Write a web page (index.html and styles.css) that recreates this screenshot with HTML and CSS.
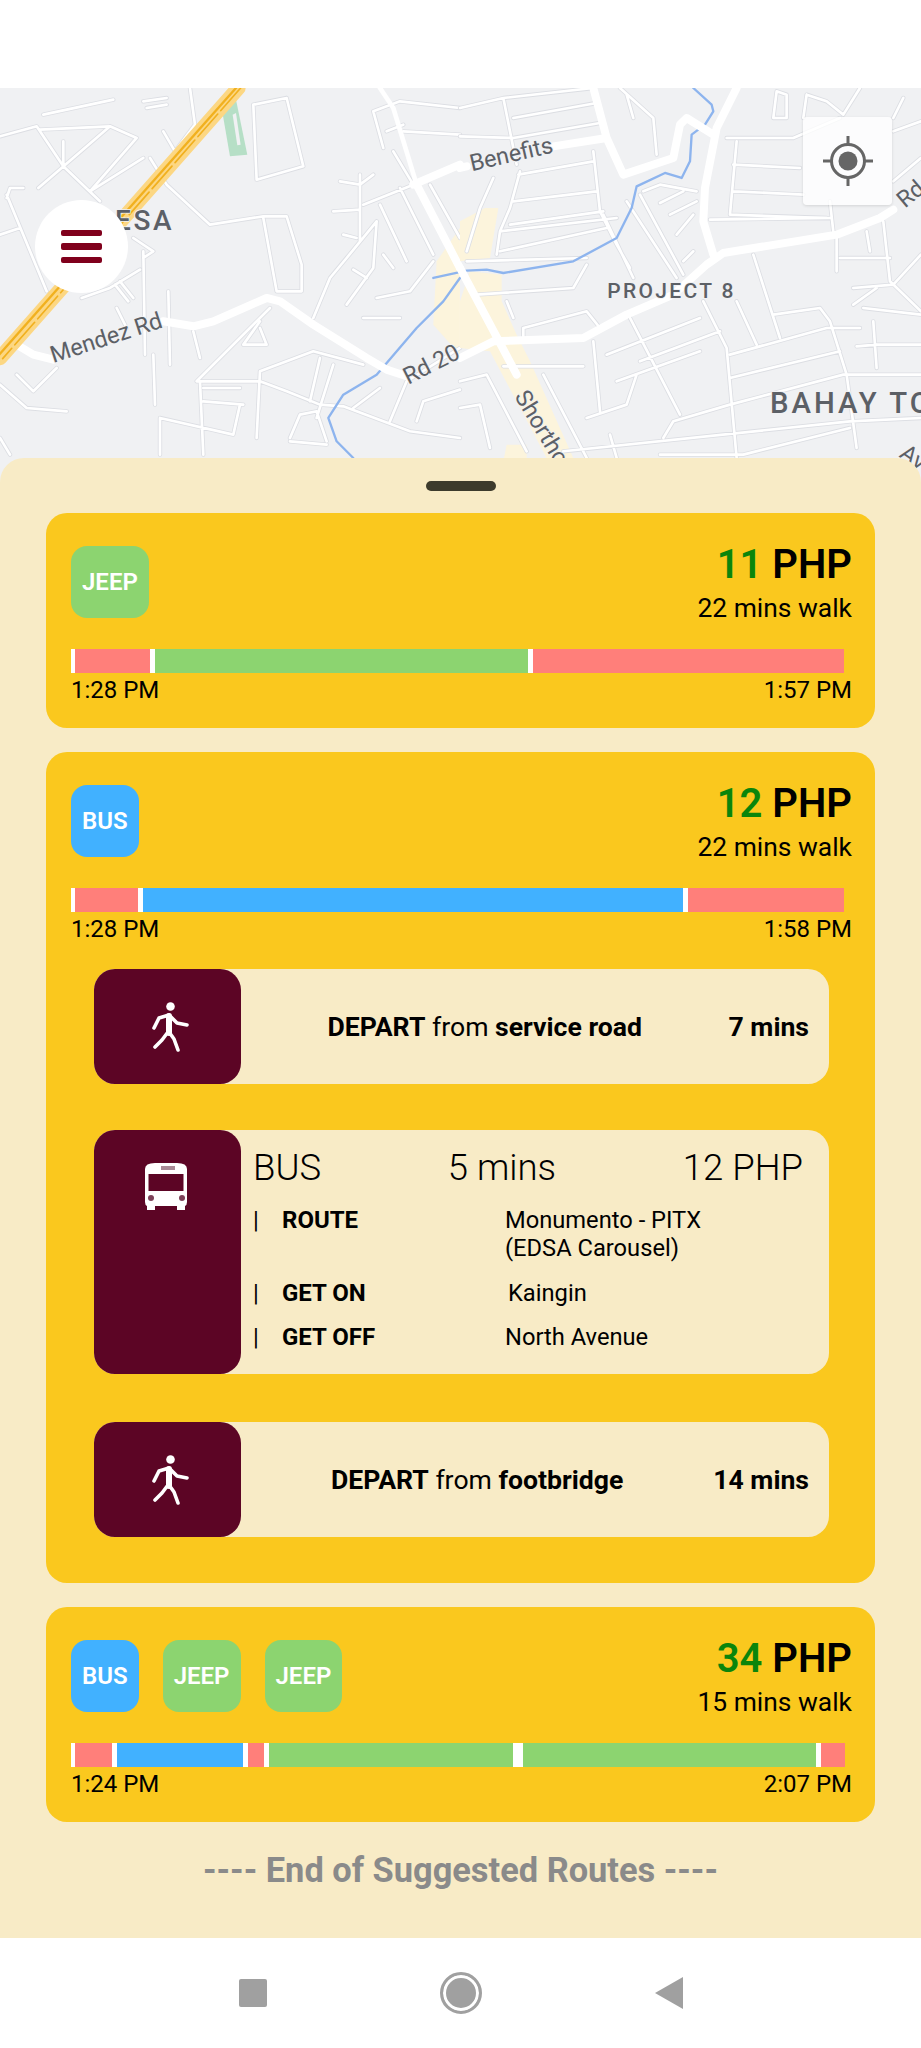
FILE: index.html
```html
<!DOCTYPE html>
<html lang="en">

<head>
    <meta charset="UTF-8">
    <meta name="viewport" content="width=device-width, initial-scale=1.0">
    <title>Suggested Routes</title>
    <link rel="stylesheet" href="styles.css">
</head>

<body>
    <div class="status"></div>

    <div class="map">
        <svg class="map-art" viewBox="0 0 921 400" width="921" height="400">
            <defs>
                <path id="minorLeft" d="M0 145L110 115L190 235L300 340M130 80L340 35M120 125L330 115L410 150L270 310M190 160V235M115 300L330 115M270 310L430 210M20 330L30 300H70M20 320L140 610M0 440L60 420M440 60L500 50M430 40L500 30M570 0L585 110L525 190M490 130L525 190M450 210L500 290L630 410L790 385H860L905 530V610H830L790 390M760 50L860 30M760 50L770 275L910 235L860 30M430 490L435 800M345 590L385 640M360 580L400 630M245 630L330 600L420 545M400 450L460 490L430 510M505 610L510 830M580 730L600 810M350 660L380 720M460 800L465 950M50 860L100 910L170 840M0 890L80 960L200 970M810 660L590 880M780 700L730 770L800 770L780 720M600 880L610 1100M590 880H780L860 910L960 950L1030 955L1230 1030L1380 1050M780 850L940 790L1090 830M780 850L770 1050M610 900H720M610 940L730 950M480 990L700 1040L720 950M480 990V1100M960 810L930 940M1000 830L950 990M870 1050L900 980L950 970L980 1060M870 1060L980 1070M1130 400L1040 510L990 570L940 690M1000 370L1080 365M1020 280L1080 290L1120 260M1080 260V460M1030 440L1070 450M1090 350L1240 290M1120 70L1200 40L1380 60M1120 70L1150 180M1160 130L1210 110M1210 130L1380 140M1180 190L1240 290M1140 350L1220 520M1200 300L1300 500M1290 290L1380 450M1040 650L1120 540L1130 400M1060 545L1100 570M1150 500L1180 540M1130 630L1230 610L1300 520M1090 690H1200M1060 960L1140 900M1170 1000L1220 880L1380 780M1250 1000L1270 940L1380 905M0 1050L30 1100" />
                <path id="minorRight" d="M0 60L130 30L400 0M130 30L170 230M160 90L410 45M0 145L160 150L420 105M175 260L400 220M160 340L410 310M150 410L430 370M120 430L150 360L180 250M110 500L120 430L470 390M120 490L440 420M20 520L380 510M100 270L60 360L20 490M400 190L420 370L470 470L510 540M480 0L580 90L590 200M500 20L520 90M430 380L520 570M540 320L670 560M550 310L600 290L710 310M600 345L670 310M630 380L710 340M650 440L700 380M670 520L700 490M500 340L650 570M50 620L340 600L380 530M140 640L160 690M190 720L380 670L420 720M190 750V720M510 690L660 980M400 760L420 970M370 835H130M440 800L720 690M540 820L780 730M470 880L720 790M730 640L800 780L830 1110M830 640L890 770M880 500L960 750M810 800L1100 720H1200M810 870L1140 790M810 950L1150 860H1383M940 680L1080 660L1110 700L1160 860L1190 1080M610 1050L640 1000L810 950M380 990L500 950L530 860M310 1090L1170 1000L1383 990M450 1040L470 1110M600 1100H850L1170 1020M250 860L380 1110M0 880L80 860L200 1090M0 960L60 950L90 1080M1190 775L1250 770H1383M1240 700L1250 840M1130 440V550M1110 340L1120 430M1140 510H1290M1270 400L1290 580L1383 670M1180 600L1300 590M1180 650L1250 600M1210 660L1383 680M1220 430L1230 490M1300 590L1383 500M800 150H1000L1140 90M830 160L810 380L1100 390M820 230L1020 240M820 310L1030 320M750 395L1110 390M950 10L940 90H980V20L950 10M1040 20L1030 90M1040 20L1100 40L1150 80L1200 0M1300 130L1383 100M1330 30L1300 90M1300 280L1383 210" />
            </defs>

            <g class="scale-left">
                <polygon class="built" points="1310,520 1380,420 1380,800 1300,710" />
                <polygon class="park" points="665,60 705,20 742,200 690,205" />
                <polygon class="park-in" points="698,80 708,75 722,170 712,172" />
                <use class="casing" href="#minorLeft" />
                <use class="minor" href="#minorLeft" />
                <path class="water" d="M1380 570L1330 640L1250 720L1130 860L1030 920L985 990L1010 1060L1060 1110" />
                <path class="mid" d="M1140 0L1180 60L1250 290" />
                <path class="major" d="M50 770L100 800L160 815M490 700L580 715L640 700L800 630L840 640L940 710L1100 810L1160 845L1220 865M1240 290L1380 230M1250 290L1380 540" />
                <path class="edsa-base" d="M715 0L0 810" />
                <path class="edsa-line" d="M708 0L-8 806" />
                <path class="edsa-mid" d="M722 0L8 812" />
            </g>

            <g class="scale-right">
                <polygon class="built" points="75,360 115,360 90,510 0,520 0,400" />
                <polygon class="built" points="30,550 125,560 125,640 170,740 210,820 340,1110 260,1110 90,790 0,780 0,640" />
                <polygon class="built" points="140,1070 200,1070 200,1120 130,1120" />
                <use class="casing" href="#minorRight" />
                <use class="minor" href="#minorRight" />
                <path class="water" d="M700 0L755 50L760 70L735 110L695 140L690 220L665 270L615 255L530 295L515 360L470 450L340 520L130 555L80 545L20 548L-80 570" />
                <path class="major" d="M0 240L20 235M280 175L440 150L490 260L640 210L660 110L680 90L760 140M830 0L770 120L735 300L730 400L760 500M0 810L100 760L370 750L500 680L640 620L740 530L790 495L1130 440L1260 390L1300 365M0 540L170 860M400 0L440 150" />
            </g>

            <g class="map-text">
                <text class="scale-left label-area" x="345" y="425">ESA</text>
                <text class="label-road" transform="scale(.3333) rotate(-18 160 825)" x="160" y="825">Mendez Rd</text>
                <text class="label-road" transform="scale(.3333) rotate(-27 1225 890)" x="1225" y="890">Rd 20</text>
                <text class="label-road" transform="translate(460 0) scale(.3333) rotate(-13 35 250)" x="35" y="250">Benefits</text>
                <text class="label-road" transform="translate(460 0) scale(.3333) rotate(59 162 925)" x="162" y="925">Shorthorn</text>
                <text class="label-road" transform="translate(460 0) scale(.3333) rotate(-40 1335 362)" x="1335" y="362">Rd</text>
                <text class="label-road" transform="translate(460 0) scale(.3333) rotate(35 1315 1105)" x="1315" y="1105">Av</text>
                <text class="label-small" transform="translate(460 0) scale(.3333)" x="442" y="630">PROJECT 8</text>
                <text class="label-big" transform="translate(460 0) scale(.3333)" x="930" y="975">BAHAY TOLE</text>
            </g>
        </svg>

        <button class="menu-btn"><span></span><span></span><span></span></button>

        <button class="locate-btn">
            <svg viewBox="0 0 56 56" width="56" height="56">
                <circle cx="28" cy="28" r="9.5" fill="#666" />
                <circle cx="28" cy="28" r="16.5" fill="none" stroke="#666" stroke-width="3" />
                <path d="M28 3V12M28 44V53M3 28H12M44 28H53" stroke="#666" stroke-width="3" />
            </svg>
        </button>
    </div>

    <div class="sheet">
        <div class="handle"></div>

        <div class="card">
            <div class="card-head">
                <div class="chips">
                    <div class="chip jeep">JEEP</div>
                </div>
                <div class="fare">
                    <div class="price"><span class="amount">11</span> PHP</div>
                    <div class="walk">22 mins walk</div>
                </div>
            </div>
            <div class="bar">
                <i class="gap" style="width:4px"></i>
                <i class="red" style="width:75px"></i>
                <i class="gap" style="width:5px"></i>
                <i class="green" style="width:373px"></i>
                <i class="gap" style="width:5px"></i>
                <i class="red" style="width:311px"></i>
            </div>
            <div class="times"><span>1:28 PM</span><span>1:57 PM</span></div>
        </div>

        <div class="card">
            <div class="card-head">
                <div class="chips">
                    <div class="chip bus">BUS</div>
                </div>
                <div class="fare">
                    <div class="price"><span class="amount">12</span> PHP</div>
                    <div class="walk">22 mins walk</div>
                </div>
            </div>
            <div class="bar">
                <i class="gap" style="width:4px"></i>
                <i class="red" style="width:63px"></i>
                <i class="gap" style="width:5px"></i>
                <i class="blue" style="width:540px"></i>
                <i class="gap" style="width:5px"></i>
                <i class="red" style="width:156px"></i>
            </div>
            <div class="times"><span>1:28 PM</span><span>1:58 PM</span></div>

            <div class="legs">
                <div class="leg">
                    <div class="leg-icon">
                        <svg class="walker" viewBox="0 0 70 70" width="70" height="70">
                            <circle cx="40.5" cy="16.5" r="4.3" />
                            <path d="M39 26V43" stroke-width="6" />
                            <path d="M39 25L29 28L24 38M41 27L47 33L57 35M38 42L32 50L25 57M39 42L44 49L48 60" stroke-width="3.6" />
                        </svg>
                    </div>
                    <div class="leg-text"><b>DEPART</b> from <b>service road</b></div>
                    <b class="leg-time">7 mins</b>
                </div>

                <div class="leg leg-ride">
                    <div class="leg-icon">
                        <svg class="coach" viewBox="0 0 70 70" width="70" height="70">
                            <path fill="#fff" fill-rule="evenodd" d="M15 19Q15 13 25 13H47Q57 13 57 19V52Q57 55 55 56V60H47V56H25V60H17V56Q15 55 15 52ZM18.5 24V41H53.5V24Z" />
                            <rect x="31" y="16" width="14" height="4" fill="#a98a96" />
                            <circle cx="21" cy="48" r="3" fill="#7c4058" />
                            <circle cx="52" cy="48" r="3" fill="#7c4058" />
                        </svg>
                    </div>
                    <div class="ride">
                        <div class="ride-head"><span>BUS</span><span>5 mins</span><span>12 PHP</span></div>
                        <div class="ride-row"><span>|</span><b>ROUTE</b><span>Monumento - PITX<br>(EDSA Carousel)</span></div>
                        <div class="ride-row"><span>|</span><b>GET ON</b><span class="nudge">Kaingin</span></div>
                        <div class="ride-row"><span>|</span><b>GET OFF</b><span>North Avenue</span></div>
                    </div>
                </div>

                <div class="leg">
                    <div class="leg-icon">
                        <svg class="walker" viewBox="0 0 70 70" width="70" height="70">
                            <circle cx="40.5" cy="16.5" r="4.3" />
                            <path d="M39 26V43" stroke-width="6" />
                            <path d="M39 25L29 28L24 38M41 27L47 33L57 35M38 42L32 50L25 57M39 42L44 49L48 60" stroke-width="3.6" />
                        </svg>
                    </div>
                    <div class="leg-text"><b>DEPART</b> from <b>footbridge</b></div>
                    <b class="leg-time">14 mins</b>
                </div>
            </div>
        </div>

        <div class="card">
            <div class="card-head">
                <div class="chips">
                    <div class="chip bus">BUS</div>
                    <div class="chip jeep">JEEP</div>
                    <div class="chip jeep">JEEP</div>
                </div>
                <div class="fare">
                    <div class="price"><span class="amount">34</span> PHP</div>
                    <div class="walk">15 mins walk</div>
                </div>
            </div>
            <div class="bar">
                <i class="gap" style="width:4px"></i>
                <i class="red" style="width:37px"></i>
                <i class="gap" style="width:5px"></i>
                <i class="blue" style="width:126px"></i>
                <i class="gap" style="width:5px"></i>
                <i class="red" style="width:16px"></i>
                <i class="gap" style="width:5px"></i>
                <i class="green" style="width:244px"></i>
                <i class="gap" style="width:10px"></i>
                <i class="green" style="width:293px"></i>
                <i class="gap" style="width:5px"></i>
                <i class="red" style="width:24px"></i>
            </div>
            <div class="times"><span>1:24 PM</span><span>2:07 PM</span></div>
        </div>

        <div class="end-note">---- End of Suggested Routes ----</div>
    </div>

    <div class="nav">
        <div class="nav-square"></div>
        <div class="nav-circle"></div>
        <svg viewBox="0 0 28 32" width="28" height="32"><path fill="#a0a0a0" d="M28 0V32L0 16z" /></svg>
    </div>
</body>

</html>
```

FILE: styles.css
```css
/* reset start */
* {
    padding: 0;
    margin: 0;
    box-sizing: border-box;
}

html,
body {
    width: 100%;
    height: 100%;
}

body {
    overflow: hidden;
    background-color: #fff;
    font-family: Roboto, "Liberation Sans", sans-serif;
    color: #000;
}

button {
    border: 0;
}

/* reset end */
.status {
    height: 88px;
}

/* map */
.map {
    height: 370px;
    position: relative;
}

.map-art {
    position: absolute;
    left: 0;
    top: 0;
    background-color: #f0f1f3;
}

.scale-left {
    transform: scale(.3333);
}

.scale-right {
    transform: translate(460px, 0) scale(.3333);
}

.map-art path,
.map-art use {
    fill: none;
    stroke-linejoin: round;
    stroke-linecap: round;
}

.casing {
    stroke: #dcdee3;
    stroke-width: 13;
}

.minor {
    stroke: #fff;
    stroke-width: 8;
}

.mid {
    stroke: #fff;
    stroke-width: 14;
}

.major {
    stroke: #fff;
    stroke-width: 24;
}

.water {
    stroke: #8db4ee;
    stroke-width: 7;
}

.built {
    fill: #fcf4dc;
}

.park {
    fill: #b6dfc6;
}

.park-in {
    fill: #f0f1f3;
}

.edsa-base {
    stroke: #fcd783;
    stroke-width: 44;
}

.edsa-line {
    stroke: #f1b01e;
    stroke-width: 7;
}

.edsa-mid {
    stroke: #f1b01e;
    stroke-width: 5;
    stroke-dasharray: 90 14;
}

.map-text text {
    fill: #5c6066;
    stroke: #f0f1f3;
    stroke-width: 5;
    paint-order: stroke;
}

.label-road {
    font-size: 70px;
}

.label-area {
    font-size: 84px;
    font-weight: 500;
    letter-spacing: 8px;
}

.label-small {
    font-size: 63px;
    font-weight: 500;
    letter-spacing: 7px;
}

.label-big {
    font-size: 88px;
    font-weight: 500;
    letter-spacing: 9px;
}

.menu-btn {
    position: absolute;
    left: 35px;
    top: 112px;
    width: 93px;
    height: 93px;
    border-radius: 50%;
    background-color: #fff;
    display: flex;
    flex-direction: column;
    align-items: center;
    justify-content: center;
    gap: 7px;
}

.menu-btn span {
    width: 41px;
    height: 6.5px;
    border-radius: 2px;
    background-color: #80001c;
}

.locate-btn {
    position: absolute;
    left: 803px;
    top: 29px;
    width: 89px;
    height: 88px;
    border-radius: 4px;
    background-color: rgba(255, 255, 255, .78);
    box-shadow: 0 1px 3px rgba(0, 0, 0, .12);
    display: flex;
    align-items: center;
    justify-content: center;
}

/* bottom sheet */
.sheet {
    height: 1480px;
    position: relative;
    background-color: #f8ebc6;
    border-radius: 24px 24px 0 0;
    padding: 23px 46px 0;
}

.handle {
    width: 70px;
    height: 10px;
    border-radius: 5px;
    margin: 0 auto 22px;
    background-color: #3d3b2c;
}

.card {
    background-color: #fac81e;
    border-radius: 21px;
    padding: 29px 23px 21px 25px;
    margin-bottom: 24px;
}

.card-head {
    display: flex;
    justify-content: space-between;
    align-items: flex-start;
}

.chips {
    display: flex;
    gap: 24px;
    margin-top: 4px;
}

.chip {
    height: 72px;
    padding: 0 11px;
    border-radius: 16px;
    display: flex;
    align-items: center;
    font-size: 24px;
    font-weight: 600;
    color: #fff;
}

.chip.jeep {
    background-color: #8cd470;
}

.chip.bus {
    background-color: #41b1ff;
}

.fare {
    text-align: right;
}

.price {
    font-size: 40px;
    line-height: 46px;
    font-weight: 600;
}

.amount {
    color: #0b850b;
}

.walk {
    font-size: 26.4px;
    line-height: 40px;
}

.bar {
    display: flex;
    height: 24px;
    margin-top: 21px;
}

.gap {
    background-color: #fff;
}

.red {
    background-color: #ff7f7a;
}

.green {
    background-color: #8cd470;
}

.blue {
    background-color: #41b1ff;
}

.times {
    display: flex;
    justify-content: space-between;
    font-size: 24px;
    line-height: 34px;
}

/* steps of a route */
.legs {
    display: flex;
    flex-direction: column;
    gap: 46px;
    margin: 23px 23px 25px;
}

.leg {
    display: flex;
    align-items: center;
    height: 115px;
    background-color: #f8ebc6;
    border-radius: 21px;
    padding-right: 20px;
    font-size: 26.6px;
}

.leg-icon {
    width: 147px;
    height: 100%;
    flex-shrink: 0;
    background-color: #5c0525;
    border-radius: 21px;
    display: flex;
    align-items: center;
    justify-content: center;
}

.walker {
    margin: 0 5px 3px 0;
    fill: #fff;
    stroke: #fff;
    filter: blur(.4px);
}

.walker circle {
    stroke: none;
}

.walker path {
    fill: none;
    stroke-linecap: round;
    stroke-linejoin: round;
}

.coach {
    margin-right: 5px;
    filter: blur(.3px);
}

.leg-text {
    flex: 1;
    text-align: center;
}

.leg b {
    font-weight: 700;
}

.leg-ride {
    height: 244px;
    align-items: stretch;
    padding-right: 0;
    margin-bottom: 2px;
}

.leg-ride .leg-icon {
    align-items: flex-start;
    padding-top: 20px;
}

.ride {
    flex: 1;
    display: flex;
    flex-direction: column;
    gap: 16.4px;
    padding: 16px 26px 0 12px;
}

.ride-head {
    display: flex;
    justify-content: space-between;
    font-size: 36.5px;
    line-height: 44px;
    font-weight: 300;
}

.ride-row {
    display: grid;
    grid-template-columns: 29px 223px 1fr;
    font-size: 23.7px;
    line-height: 28px;
}

.ride-row b {
    font-size: 24px;
}

.nudge {
    margin-left: 3px;
}

.end-note {
    margin-top: 28px;
    text-align: center;
    font-size: 34.4px;
    line-height: 40px;
    font-weight: 700;
    color: #8a8a8a;
}

/* android nav */
.nav {
    height: 110px;
    display: flex;
    align-items: center;
    justify-content: center;
    gap: 173px;
    background-color: #fff;
    position: relative;
}

.nav-square {
    width: 28px;
    height: 28px;
    border-radius: 2px;
    background-color: #a0a0a0;
}

.nav-circle {
    width: 42px;
    height: 42px;
    border-radius: 50%;
    border: 3px solid #a0a0a0;
    background-color: #a0a0a0;
    box-shadow: inset 0 0 0 3px #fff;
}
```
